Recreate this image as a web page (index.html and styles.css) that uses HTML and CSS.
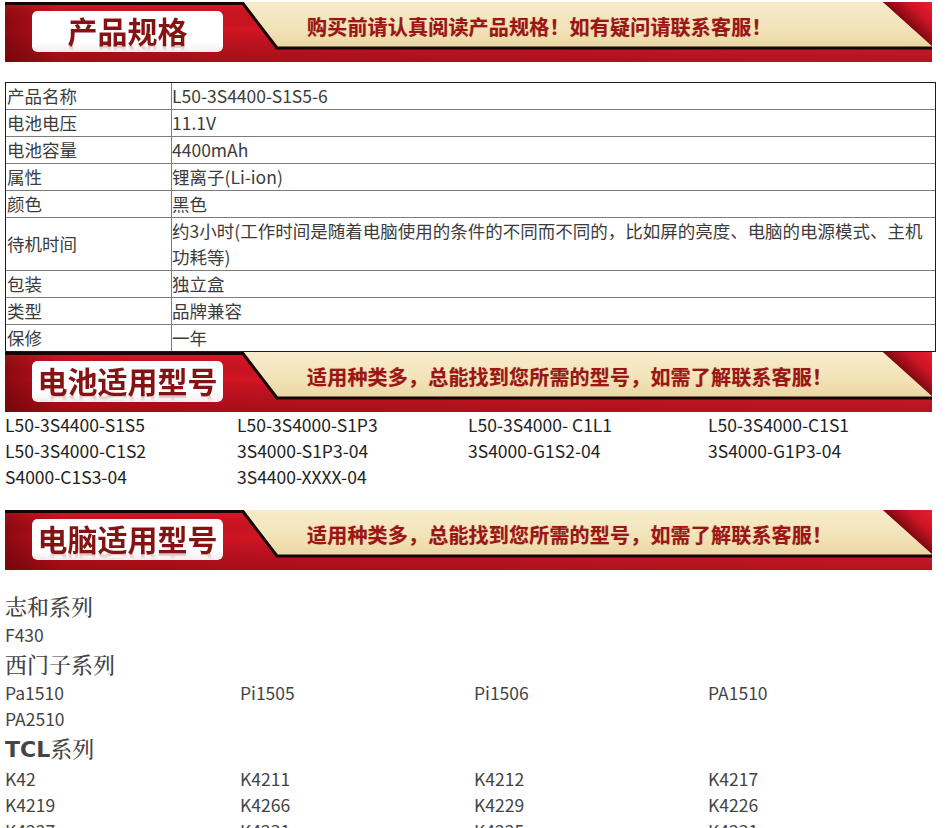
FILE: index.html
```html
<!DOCTYPE html>
<html lang="zh-CN">
<head>
<meta charset="utf-8">
<title>产品规格</title>
<link rel="stylesheet" href="styles.css">
</head>
<body>
<div class="page">

  <div class="banner">
    <svg class="banner-art" viewBox="0 0 927 60" preserveAspectRatio="none" aria-hidden="true">
      <defs>
        <linearGradient id="redH" x1="0" y1="0" x2="1" y2="0">
          <stop offset="0" stop-color="#8e0a10"/>
          <stop offset="0.06" stop-color="#c8101d"/>
          <stop offset="0.3" stop-color="#d51524"/>
          <stop offset="1" stop-color="#e61d2e"/>
        </linearGradient>
        <linearGradient id="shadeV" x1="0" y1="0" x2="0" y2="1">
          <stop offset="0" stop-color="#ff2a3c" stop-opacity="0.25"/>
          <stop offset="0.45" stop-color="#000" stop-opacity="0"/>
          <stop offset="1" stop-color="#400000" stop-opacity="0.3"/>
        </linearGradient>
        <linearGradient id="cream" x1="0" y1="0" x2="0" y2="1">
          <stop offset="0" stop-color="#f7ecca"/>
          <stop offset="0.6" stop-color="#f2e2b7"/>
          <stop offset="1" stop-color="#ead6a2"/>
        </linearGradient>
        <linearGradient id="corner" gradientUnits="userSpaceOnUse" x1="927" y1="0" x2="905" y2="24">
          <stop offset="0" stop-color="#ee1d30"/>
          <stop offset="0.55" stop-color="#c91424"/>
          <stop offset="1" stop-color="#800810"/>
        </linearGradient>
      </defs>
      <rect x="0" y="0" width="927" height="60" fill="url(#redH)"/>
      <rect x="0" y="0" width="927" height="60" fill="url(#shadeV)"/>
      <polygon points="238,0 878,0 927,44 927,46 272,46" fill="url(#cream)"/>
      <polygon points="878,0 927,0 927,44" fill="url(#corner)"/>
      <polyline points="0,1.5 238,1.5 272,46 927,46" fill="none" stroke="#140404" stroke-width="3"/>
    </svg>
    <div class="label"><span class="label-text">产品规格</span></div>
    <div class="slogan">购买前请认真阅读产品规格！如有疑问请联系客服！</div>
  </div>

  <table class="spec">
    <colgroup><col class="k"><col></colgroup>
    <tr><td>产品名称</td><td>L50-3S4400-S1S5-6</td></tr>
    <tr><td>电池电压</td><td>11.1V</td></tr>
    <tr><td>电池容量</td><td>4400mAh</td></tr>
    <tr><td>属性</td><td>锂离子(Li-ion)</td></tr>
    <tr><td>颜色</td><td>黑色</td></tr>
    <tr><td>待机时间</td><td>约3小时(工作时间是随着电脑使用的条件的不同而不同的，比如屏的亮度、电脑的电源模式、主机功耗等)</td></tr>
    <tr><td>包装</td><td>独立盒</td></tr>
    <tr><td>类型</td><td>品牌兼容</td></tr>
    <tr><td>保修</td><td>一年</td></tr>
  </table>

  <div class="banner">
    <svg class="banner-art" viewBox="0 0 927 60" preserveAspectRatio="none" aria-hidden="true">
      <rect x="0" y="0" width="927" height="60" fill="url(#redH)"/>
      <rect x="0" y="0" width="927" height="60" fill="url(#shadeV)"/>
      <polygon points="238,0 878,0 927,44 927,46 272,46" fill="url(#cream)"/>
      <polygon points="878,0 927,0 927,44" fill="url(#corner)"/>
      <polyline points="0,1.5 238,1.5 272,46 927,46" fill="none" stroke="#140404" stroke-width="3"/>
    </svg>
    <div class="label"><span class="label-text">电池适用型号</span></div>
    <div class="slogan">适用种类多，总能找到您所需的型号，如需了解联系客服！</div>
  </div>

  <div class="models">
    <span>L50-3S4400-S1S5</span><span>L50-3S4000-S1P3</span><span>L50-3S4000- C1L1</span><span>L50-3S4000-C1S1</span>
    <span>L50-3S4000-C1S2</span><span>3S4000-S1P3-04</span><span>3S4000-G1S2-04</span><span>3S4000-G1P3-04</span>
    <span>S4000-C1S3-04</span><span>3S4400-XXXX-04</span>
  </div>

  <div class="banner banner-gap">
    <svg class="banner-art" viewBox="0 0 927 60" preserveAspectRatio="none" aria-hidden="true">
      <rect x="0" y="0" width="927" height="60" fill="url(#redH)"/>
      <rect x="0" y="0" width="927" height="60" fill="url(#shadeV)"/>
      <polygon points="238,0 878,0 927,44 927,46 272,46" fill="url(#cream)"/>
      <polygon points="878,0 927,0 927,44" fill="url(#corner)"/>
      <polyline points="0,1.5 238,1.5 272,46 927,46" fill="none" stroke="#140404" stroke-width="3"/>
    </svg>
    <div class="label"><span class="label-text">电脑适用型号</span></div>
    <div class="slogan">适用种类多，总能找到您所需的型号，如需了解联系客服！</div>
  </div>

  <div class="series">
    <h3 class="series-title">志和系列</h3>
    <div class="series-grid"><span>F430</span></div>
    <h3 class="series-title">西门子系列</h3>
    <div class="series-grid">
      <span>Pa1510</span><span>Pi1505</span><span>Pi1506</span><span>PA1510</span>
      <span>PA2510</span>
    </div>
    <h3 class="series-title"><b class="latin">TCL</b>系列</h3>
    <div class="series-grid">
      <span>K42</span><span>K4211</span><span>K4212</span><span>K4217</span>
      <span>K4219</span><span>K4266</span><span>K4229</span><span>K4226</span>
      <span>K4227</span><span>K4231</span><span>K4225</span><span>K4231</span>
    </div>
  </div>

</div>
</body>
</html>
```

FILE: styles.css
```css
html, body {
  margin: 0;
  padding: 0;
  background: #ffffff;
}

body {
  font-family: "Noto Sans CJK SC", "Noto Sans", sans-serif;
}

.page {
  width: 931px;
  padding: 2px 0 0 5px;
}

/* ---------- banners ---------- */
.banner {
  position: relative;
  width: 927px;
  height: 60px;
  display: flex;
  align-items: flex-start;
}

.banner-gap {
  margin-top: 20px;
}

.banner-art {
  position: absolute;
  left: 0;
  top: 0;
  width: 100%;
  height: 100%;
  display: block;
}

.label {
  position: relative;
  margin: 9px 0 0 27px;
  width: 191px;
  height: 41px;
  flex: none;
  border-radius: 5px;
  background: linear-gradient(#ffffff, #ffffff 75%, #f3eeee);
  text-align: center;
  clip-path: inset(0 round 5px);
}

.label-text {
  display: inline-block;
  margin-top: 4px;
  height: 31px;
  line-height: 31px;
  font-size: 30px;
  font-weight: 700;
  color: #861313;
  white-space: nowrap;
  -webkit-box-reflect: below -2px linear-gradient(to bottom, rgba(0, 0, 0, 0) 76%, rgba(0, 0, 0, 0.3));
}

.slogan {
  position: relative;
  margin-left: 84px;
  line-height: 50px;
  font-size: 20px;
  font-weight: 700;
  letter-spacing: 0.2px;
  color: #9c1616;
  white-space: nowrap;
  text-shadow: 0 0 1px rgba(120, 10, 10, 0.4);
}

/* ---------- spec table ---------- */
.spec {
  margin-top: 20px;
  width: 931px;
  table-layout: fixed;
  border: 1px solid #1c1c1c;
  border-spacing: 0;
  font-size: 17.5px;
  line-height: 26px;
  color: #3c3c3c;
}

.spec col.k {
  width: 166px;
}

.spec td {
  padding: 0 0 0 1px;
  border-right: 1px solid #7c7c7c;
  border-bottom: 1px solid #7c7c7c;
  vertical-align: middle;
}

.spec td:last-child {
  border-right: 0;
  padding-left: 0;
}

.spec tr:last-child td {
  border-bottom: 0;
}

/* ---------- battery model list ---------- */
.models {
  display: grid;
  grid-template-columns: 232px 231px 240px 1fr;
  font-size: 17.5px;
  line-height: 26px;
  color: #222222;
  white-space: nowrap;
}

/* ---------- laptop series ---------- */
.series {
  margin-top: 20px;
}

.series-title {
  margin: 0;
  font-family: "Noto Serif CJK SC", "Noto Sans CJK SC", serif;
  font-size: 22px;
  line-height: 32px;
  font-weight: 500;
  color: #444444;
}

.series-title .latin {
  font-family: "DejaVu Sans", "Noto Sans", sans-serif;
  font-weight: 700;
  font-size: 22px;
}

.series-grid {
  display: grid;
  grid-template-columns: 235px 234px 234px 1fr;
  font-size: 17.5px;
  line-height: 26px;
  color: #444444;
  white-space: nowrap;
}
```
